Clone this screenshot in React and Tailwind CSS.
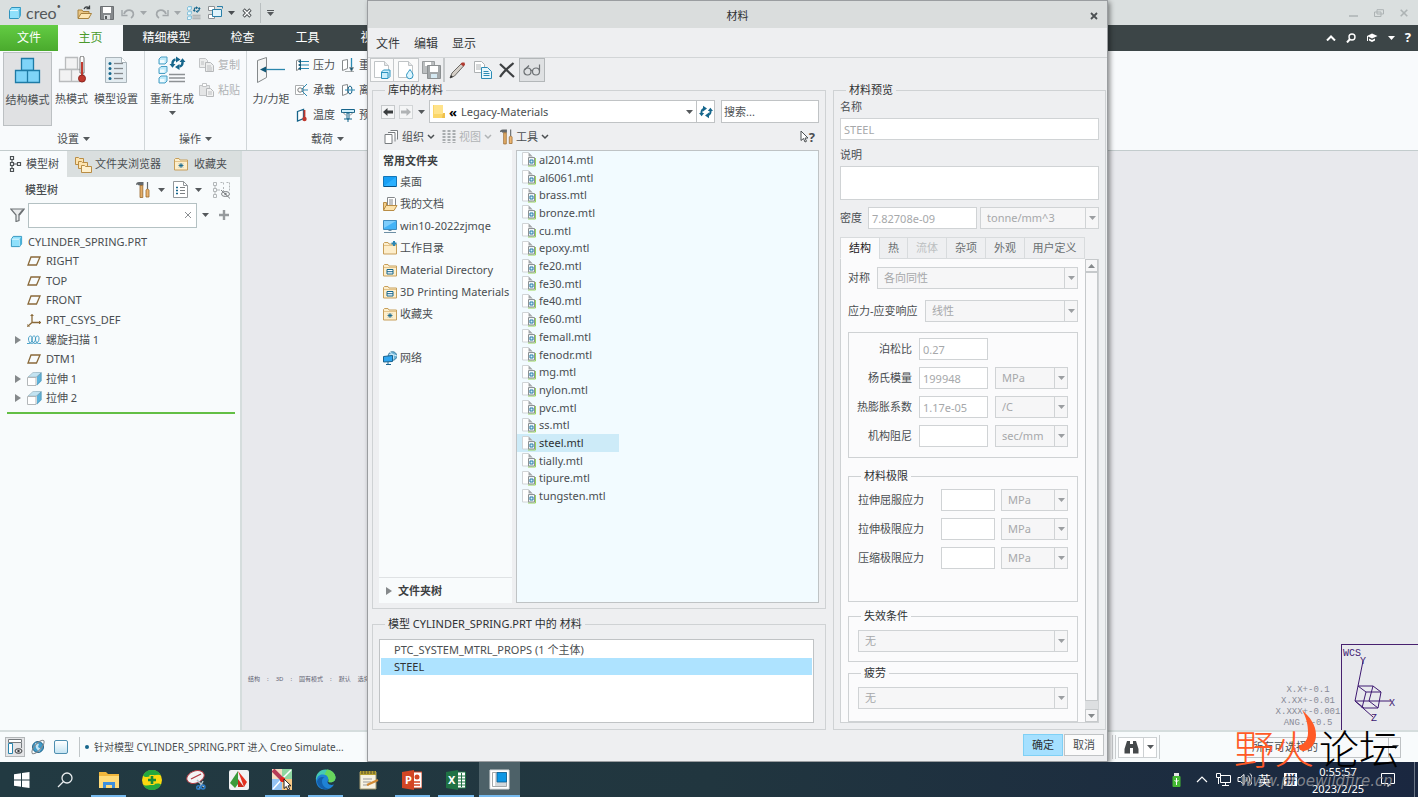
import clsx from 'clsx';

const FILES = [
  'al2014', 'al6061', 'brass', 'bronze', 'cu', 'epoxy', 'fe20', 'fe30', 'fe40', 'fe60',
  'femall', 'fenodr', 'mg', 'nylon', 'pvc', 'ss', 'steel', 'tially', 'tipure', 'tungsten',
];

/* ---------- icons ---------- */

function Svg({ w = 16, h = w, box, children, className }) {
  return (
    <svg width={w} height={h} viewBox={box || `0 0 ${w} ${h}`} fill="none" className={clsx('shrink-0', className)} aria-hidden="true">
      {children}
    </svg>
  );
}

function Caret({ className = 'text-[#55595c]' }) {
  return (
    <Svg w={7} h={4} className={className}>
      <path d="M0 0h7L3.5 4z" fill="currentColor" />
    </Svg>
  );
}

function Chevron({ className }) {
  return (
    <Svg w={8} h={6} className={className}>
      <path d="M1 1l3 3 3-3" stroke="currentColor" strokeWidth="1.5" />
    </Svg>
  );
}

function CubeIcon({ w = 14 }) {
  return (
    <Svg w={w} box="0 0 14 14">
      <path d="M1.5 4.5l2-3h9v8l-2 3h-9z" fill="#8fe0fb" stroke="#2f93bd" />
      <path d="M2 4.5h8.500v7.500" stroke="#e6f9ff" />
      <path d="M10.500 4.500l2-3v8l-2 3z" fill="#4bb3db" />
    </Svg>
  );
}

function SmallCube({ x, y }) {
  return (
    <g>
      <path d={`M${x} ${y + 2}l2-2h6v5l-2 2h-6z`} fill="#bfeafa" stroke="#4a9fc4" />
      <path d={`M${x + 1} ${y + 3}h4.500v3h-4.500z`} fill="#f0fbff" />
    </g>
  );
}

function Recycle({ w = 14 }) {
  return (
    <Svg w={w} box="0 0 14 14">
      <path d="M2.500 9V7a3.500 3.500 0 0 1 2-3.200" stroke="#16668c" strokeWidth="2" />
      <path d="M4 .8l4 2.800L4 6.400z" fill="#16668c" />
      <path d="M0 8h5.200L2.600 11.300z" fill="#16668c" />
      <path d="M11.500 5v2a3.500 3.500 0 0 1-2 3.200" stroke="#16668c" strokeWidth="2" />
      <path d="M10 7.600l-4 2.800 4 2.800z" fill="#16668c" />
      <path d="M8.800 6H14l-2.600-3.300z" fill="#16668c" />
    </Svg>
  );
}

function FolderOpen({ w = 15 }) {
  return (
    <Svg w={w} box="0 0 15 15">
      <path d="M1 13V5h4l1 1.500h6V13z" fill="#e9c583" stroke="#a8823e" />
      <path d="M1 13.500L4 8.500h10.500l-3 5z" fill="#fde6b4" stroke="#a8823e" />
      <path d="M7 4c1-2 3-2.500 5-1.500M12.500 .5v3h-3" stroke="#3d4245" strokeWidth="1.300" />
    </Svg>
  );
}

function SaveIcon() {
  return (
    <Svg w={14}>
      <path d="M.5.5h13v13h-13z" fill="#85898c" stroke="#6b6f72" />
      <path d="M3 1h8v6H3z" fill="#fff" />
      <path d="M4 9h6v4.500H4z" fill="#d8dcde" />
      <path d="M5 10h2v3H5z" fill="#55595c" />
    </Svg>
  );
}

function UndoIcon({ flip }) {
  return (
    <Svg w={14} h={12} className={flip ? '-scale-x-100' : ''}>
      <path d="M3 7C4 3.500 8 2 11 4c2.500 2 1.500 5.500-1 7" stroke="#a2a7aa" strokeWidth="1.800" />
      <path d="M1 3v5.500h5.500" fill="none" stroke="#a2a7aa" strokeWidth="1.400" />
    </Svg>
  );
}

function RegenIcon({ w = 14 }) {
  return (
    <Svg w={w} box="0 0 28 28">
      <SmallCube x={1} y={1} />
      <SmallCube x={1} y={10.5} />
      <SmallCube x={1} y={20} />
      <path d="M11 18.500h16M11 22h16M11 25.500h16" stroke="#8d9194" strokeWidth="1.400" />
      <g transform="translate(12 0)">
        <path d="M2.500 9V7a4 4 0 0 1 3-3.600M12.500 5v2a4 4 0 0 1-3 3.600" stroke="#16668c" strokeWidth="2.400" />
        <path d="M6 .5l4.500 3L6 6.500zM-.5 8h6L2.500 11.800zM9.500 8L5 11l4.500 3zM9.500 6h6l-3-3.800z" fill="#16668c" />
      </g>
    </Svg>
  );
}

function WindowsIcon() {
  return (
    <Svg w={15} h={13}>
      <path d="M.5.500h6v4h-6zM.5 8.500h6v4h-6z" fill="#fff" stroke="#8d9194" />
      <path d="M4.500 3.500h9v7h-9z" fill="#dff3fb" stroke="#2a7fa8" />
      <path d="M9 .5h5.500v2" stroke="#2a7fa8" />
    </Svg>
  );
}

function BlocksIcon({ hot }) {
  const f = hot ? '#f2f2f3' : '#7fd4f8';
  const s = hot ? '#b9bbbd' : '#1e7ba6';
  return (
    <Svg w={28} h={28}>
      <path d="M7.500 1.500h12v12h-12z" fill={f} stroke={s} strokeWidth="1.300" />
      <path d="M1.500 13.500h12v12h-12zM13.500 13.500h12v12h-12z" fill={f} stroke={s} strokeWidth="1.300" />
      {hot && (
        <g>
          <path d="M22 2a2 2 0 0 1 4 0v15h-4z" fill="#fff" stroke="#777" />
          <path d="M23 6h2v13h-2z" fill="#c23a30" />
          <circle cx="24" cy="22.500" r="3.500" fill="#c0382e" stroke="#8e2620" />
        </g>
      )}
    </Svg>
  );
}

function SettingsDoc() {
  return (
    <Svg w={24} h={28}>
      <path d="M1.500 1.500h16l5 5v20h-21z" fill="#e3ecf1" stroke="#aab4ba" />
      <path d="M17.500 1.500v5h5" fill="#fff" stroke="#aab4ba" />
      {[7.5, 12.5, 17.5, 22.5].map((y) => (
        <g key={y}>
          <circle cx="6" cy={y} r="1.500" fill="#16668c" />
          <path d={`M10 ${y}h9`} stroke="#85898c" strokeWidth="1.300" />
        </g>
      ))}
    </Svg>
  );
}

function CopyGrey() {
  return (
    <Svg w={15} h={14}>
      <path d="M.5.500h6l2 2v7h-8z" fill="#eceded" stroke="#c2c4c6" />
      <path d="M6.500 4.500h5l3 3v6h-8z" fill="#eceded" stroke="#b6b8ba" />
      <path d="M2 4h3M2 6h3M8 8h4M8 10h5M8 12h5" stroke="#bcbec0" />
    </Svg>
  );
}

function PasteGrey() {
  return (
    <Svg w={15} h={14}>
      <path d="M.5 2.500h10v10h-10z" fill="#e4e5e6" stroke="#c2c4c6" />
      <path d="M3.500.500h4v3h-4z" fill="#fff" stroke="#c2c4c6" />
      <path d="M7.500 5.500h4l3 3v5h-7z" fill="#f3f3f3" stroke="#b6b8ba" />
      <path d="M9 9h4M9 11h4" stroke="#bcbec0" />
    </Svg>
  );
}

function ForceIcon() {
  return (
    <Svg w={30} h={28}>
      <path d="M1.500 4.500l9-3v20l-9 5z" fill="#f4f5f5" stroke="#85898b" />
      <path d="M8 13.500h21" stroke="#2b87ad" strokeWidth="1.300" />
      <path d="M4 13.500l6-3v6z" fill="#125877" />
    </Svg>
  );
}

const LOAD_ICONS = {
  pressure: (
    <Svg w={14}>
      <path d="M1.500 2.500l4-1v9l-4 2z" stroke="#85898b" fill="#fff" />
      <path d="M4 3.500h10M4 7h10M4 10.500h10" stroke="#2b8ab3" />
      <path d="M3 3.500l3-2v4zM3 7l3-2v4zM3 10.500l3-2v4z" fill="#125877" />
    </Svg>
  ),
  bearing: (
    <Svg w={14}>
      <path d="M.5 2.500h8v9h-8z" stroke="#aaadaf" fill="#fff" />
      <circle cx="5" cy="7" r="2.200" stroke="#777" />
      <path d="M7 7h6M7 6l5-5M7 8l5 5" stroke="#2b8ab3" />
    </Svg>
  ),
  temperature: (
    <Svg w={14}>
      <path d="M2.500 3.500l6-2v9l-6 2.500z" stroke="#17648a" fill="#fff" strokeWidth="1.300" />
      <path d="M9.500 2v8" stroke="#c0382e" strokeWidth="1.800" />
      <circle cx="9.500" cy="11" r="2.200" fill="#c0382e" />
    </Svg>
  ),
  gravity: (
    <Svg w={14}>
      <path d="M1.500 2.500l5-1v9l-5 2z" stroke="#85898b" fill="#fff" />
      <path d="M10.500 0v12" stroke="#2b8ab3" strokeWidth="1.300" />
      <path d="M10.500 13.500l-2-4h4zM4 13.500h9" fill="#125877" stroke="#85898b" strokeWidth=".7" />
    </Svg>
  ),
  centrifugal: (
    <Svg w={14}>
      <path d="M1.500 2.500l5-1v9l-5 2z" stroke="#85898b" fill="#fff" />
      <ellipse cx="9" cy="7" rx="2" ry="4" stroke="#17648a" />
      <path d="M4 7h10" stroke="#2b8ab3" />
    </Svg>
  ),
  preload: (
    <Svg w={14}>
      <path d="M.5 1.500h13v3H.5z" fill="#cfeefa" stroke="#17648a" />
      <path d="M6 5h2v6H6zM3 11h8M7 14v-3" stroke="#17648a" />
      <path d="M2 4.500l3 3M12 4.500l-3 3" stroke="#85898b" />
    </Svg>
  ),
};

function TreeTabIcon() {
  return (
    <Svg w={14} h={18}>
      <path d="M2.500 1.500h3v3h-3zM2.500 7.500h3v3h-3zM2.500 13.500h3v3h-3zM9.500 7.500h3v3h-3zM4 4.500v3M4 10.500v3M5.500 9h4" stroke="#4c5154" strokeWidth="1.200" />
    </Svg>
  );
}

function FoldersIcon() {
  return (
    <Svg w={17} h={17}>
      <path d="M.5 8.500v-7h3l1 1h4v6z" fill="#fde3ae" stroke="#b98d45" />
      <path d="M3.500 12.500v-7h3l1 1h5v6z" fill="#fde3ae" stroke="#b98d45" />
      <path d="M6.500 16.500v-7h3l1 1h6v6z" fill="#fff0cd" stroke="#b98d45" />
    </Svg>
  );
}

function FolderMark({ kind }) {
  return (
    <Svg w={14} h={14}>
      <path d="M.5 13V2.500l1-1h3.500l1 1.500h7.500v10z" fill="#fdeecb" stroke="#c79f5a" />
      <path d="M1 4.500h12" stroke="#e3c48b" />
      {kind === 'star' && (
        <path d="M7 6v5M4.500 8.500h5M5.200 6.700l3.600 3.600M8.800 6.700l-3.600 3.600" stroke="#16668c" strokeWidth=".9" />
      )}
      {kind === 'book' && <path d="M4 6.500h6v4.500H4zM4 8.700h6" fill="#fff" stroke="#16668c" />}
      {kind === 'new' && <path d="M11 0v5M8.500 2.500h5" stroke="#2b86b3" strokeWidth="2" />}
    </Svg>
  );
}

function ToolsIcon({ w = 15 }) {
  return (
    <Svg w={w} h={17} box="0 0 15 17">
      <path d="M1 4c0-2 1-3 3-3h4.500v3.500H4L2.500 3.500z" fill="#63686b" />
      <path d="M5 4.500h2.800v12H5z" fill="#e3ad68" stroke="#97672c" strokeWidth=".8" />
      <path d="M12.500 1v7" stroke="#63686b" strokeWidth="1.200" />
      <path d="M11 9c0-1 3-1 3 0v7h-3z" fill="#edb671" stroke="#97672c" strokeWidth=".8" />
    </Svg>
  );
}

function ListDoc() {
  return (
    <Svg w={15} h={17}>
      <path d="M.5.500h10l4 4v12h-14z" fill="#fff" stroke="#92979a" />
      <path d="M10.500.500v4h4" stroke="#92979a" />
      <path d="M3 6.500h2M3 9.500h2M3 12.500h2" stroke="#16668c" strokeWidth="1.500" />
      <path d="M7 6.500h5M7 9.500h5M7 12.500h5" stroke="#7c8184" />
    </Svg>
  );
}

function HiddenTree() {
  return (
    <Svg w={19} h={18}>
      <path d="M1.500 1.500h3v3h-3zM1.500 7.500h3v3h-3zM1.500 13.500h3v3h-3zM3 4.500v3M3 10.500v3M5 9h3" stroke="#b3b7b9" />
      <path d="M8.500 1.500h3v3M11.500 6v4M14.500 1.500h3v8" stroke="#b3b7b9" strokeDasharray="2 1" />
      <ellipse cx="13.500" cy="13" rx="4" ry="2.500" stroke="#7c8083" />
      <circle cx="13.500" cy="13" r="1.200" fill="#7c8083" />
      <path d="M9 9l9 8.500" stroke="#7c8083" />
    </Svg>
  );
}

function FilterIcon() {
  return (
    <Svg w={15} h={14}>
      <path d="M.8 1h13.400L9 7v5.500l-3 1V7z" fill="#e9ebec" stroke="#6d7275" strokeWidth="1.200" />
      <path d="M9 7l4-5" stroke="#6d7275" strokeWidth="2" />
    </Svg>
  );
}

const TREE_ICONS = {
  part: <CubeIcon w={13} />,
  plane: (
    <Svg w={14} h={10}>
      <path d="M4 1h9l-3.500 8H1z" stroke="#8a6a3a" strokeWidth="1.300" />
    </Svg>
  ),
  csys: (
    <Svg w={15} h={14}>
      <path d="M5 1v8.500h9M5 9.500l-4 3.500" stroke="#8a6a3a" strokeWidth="1.300" />
      <path d="M3.500 2.500h3M12.500 8v3M0 11v3h3" stroke="#8a6a3a" />
    </Svg>
  ),
  helix: (
    <Svg w={14} h={10}>
      <path d="M0 8.500h2c2 0 3-2 3-4.500S4.500 1 3.500 1 1.500 2 1.500 4s1 4.500 3 4.500 4-2 4-4.500-.5-3-1.500-3-2 1-2 3 1 4.500 3 4.500 4-2 4-4.500-.5-3-1.500-3-2 1-2 3 1 4.500 3 4.500H14" stroke="#3a97c2" strokeWidth=".9" />
    </Svg>
  ),
  extrude: (
    <Svg w={15} h={14}>
      <path d="M5 4l4-3.500h5.500V9L10 13.500V5z" fill="#5db4dc" />
      <path d="M1 5l5-4.500h8.500L10 5z" fill="#c3e3f1" stroke="#9db8c3" strokeWidth=".7" />
      <path d="M.5 5.500h8.500v8H.5z" fill="#fff" stroke="#b3b7b9" />
      <path d="M9.500 5L14 1v7.500L9.500 13" stroke="#5f97b0" strokeWidth=".7" />
    </Svg>
  ),
};

function FileIcon() {
  return (
    <Svg w={14} h={15}>
      <path d="M.5.500h6l3.500 3.500v9H.5z" fill="#fff" stroke="#d0d4d6" />
      <path d="M6.500.500v4h4z" fill="#a5a9ac" />
      <path d="M6 14h7.500V6" stroke="#9ad65b" />
      <path d="M6.500 5.500h6v7.500h-6z" fill="#eef4f7" stroke="#8c9295" />
      <path d="M8 8h3v3H8z" fill="#d8f1fc" stroke="#277da6" />
    </Svg>
  );
}

const PLACE_ICONS = {
  desktop: (
    <Svg w={14} h={12}>
      <path d="M.5.500h13v10H.5z" fill="#18a0f5" stroke="#1376b8" />
      <path d="M1 10L13 1v9z" fill="#2bb0ff" />
      <path d="M1 10.500h12" stroke="#0b4f80" />
    </Svg>
  ),
  docs: (
    <Svg w={15} h={14}>
      <path d="M4.500.500h7l1 1v8h-8z" fill="#fff" stroke="#84888b" />
      <path d="M6 3h4M6 5h4M6 7h4" stroke="#84888b" />
      <path d="M.5 13V5.500h3v4z" fill="#f2cf8c" stroke="#b98d45" />
      <path d="M.5 13.500l2.500-5h11l-3 5z" fill="#fce2ab" stroke="#b98d45" />
    </Svg>
  ),
  pc: (
    <Svg w={14} h={13}>
      <path d="M.5.500h13v9H.5z" fill="#43b3f7" stroke="#3f8bbd" />
      <path d="M1 1h12L1 8z" fill="#7dcdfc" />
      <path d="M5.500 10.500h3M1 12.500h12" stroke="#6d8fa5" />
    </Svg>
  ),
  work: <FolderMark kind="new" />,
  book: <FolderMark kind="book" />,
  fav: <FolderMark kind="star" />,
  net: (
    <Svg w={14} h={14}>
      <circle cx="9.500" cy="5" r="4.300" fill="#6fb5d8" stroke="#3f7ea0" />
      <path d="M7 1.500c3 1 4 3 3 7M6 4c3-1 5 0 8 1" stroke="#d7eefa" />
      <path d="M.5 5.500l9-1v6l-9 .500z" fill="#2fa5ef" stroke="#19638f" />
      <path d="M3 13.500h5M5 11v2" stroke="#19638f" />
    </Svg>
  ),
};

/* ---------- form bits ---------- */

function Select({ label, value, className, id }) {
  return (
    <div className={clsx('relative h-[22px]', className)}>
      <select id={id} aria-label={label} disabled className="block h-full w-full appearance-none border border-[#d0d3d5] bg-[#f6f6f7] pl-1.5 text-[11px] leading-4 text-[#a6a8aa] opacity-100">
        <option>{value}</option>
      </select>
      <span className="pointer-events-none absolute inset-y-px right-px flex w-[13px] items-center justify-center border-l border-[#d0d3d5]">
        <Caret className="text-[#9b9ea1]" />
      </span>
    </div>
  );
}

function Field({ label, value, className, id }) {
  return (
    <input
      id={id}
      aria-label={label}
      disabled
      defaultValue={value}
      className={clsx('h-[22px] min-w-0 border border-[#d0d3d5] bg-white px-[3px] text-[11px] text-[#a6a8aa]', className)}
    />
  );
}

function Group({ title, className, body, children }) {
  return (
    <fieldset className={clsx('flex min-w-0 flex-col border border-[#cfd2d4]', className)}>
      <legend className="ml-3 h-4 px-[3px] leading-4 text-[#2e3133]">{title}</legend>
      <div className={clsx('flex flex-1 flex-col', body)}>{children}</div>
    </fieldset>
  );
}

/* ---------- Creo main window ---------- */

function TitleBar() {
  return (
    <header className="flex h-[25px] items-center bg-[#dadfdf] pl-2">
      <CubeIcon />
      <span className="ml-1 w-[49px] font-['Lato','Open_Sans',sans-serif] text-[16px] leading-5 text-[#54585a]">
        creo<span className="align-top text-[7px] leading-none">•</span>
      </span>
      <div className="flex items-center">
        <button aria-label="打开" className="flex w-[22px] justify-center pr-1"><FolderOpen /></button>
        <button aria-label="保存" className="flex w-[20px] justify-center"><SaveIcon /></button>
        <button aria-label="撤消" className="flex w-[22px] justify-center"><UndoIcon /></button>
        <Caret className="mr-[3px] ml-px text-[#a2a7aa]" />
        <button aria-label="重做" className="flex w-[24px] justify-center"><UndoIcon flip /></button>
        <Caret className="mr-[3px] text-[#a2a7aa]" />
        <button aria-label="重新生成" className="flex w-[20px] justify-center"><RegenIcon /></button>
        <button aria-label="窗口" className="flex w-[22px] justify-center"><WindowsIcon /></button>
        <Caret className="ml-0.5" />
        <button aria-label="关闭窗口" className="flex w-[24px] justify-center">
          <Svg w={10}><path d="M1.500 1.500l7 7M8.500 1.500l-7 7" stroke="#4c5154" strokeWidth="3.200" /><path d="M2 2l6 6M8 2l-6 6" stroke="#fff" strokeWidth="1.400" /></Svg>
        </button>
        <span className="ml-px h-5 w-px bg-[#b9bfc0]" />
        <span className="ml-1.5 flex flex-col gap-px"><span className="h-px w-[7px] bg-[#55595c]" /><Caret /></span>
      </div>
      <div className="ml-auto flex items-center gap-4 pr-[10px] text-[#adb3b4]">
        <Svg w={9} h={8}><path d="M0 7h9" stroke="currentColor" strokeWidth="1.500" /></Svg>
        <Svg w={10} h={8}><path d="M3 .7h6.500V5H3zM.5 3H7v4.500H.5z" stroke="currentColor" /></Svg>
        <Svg w={8}><path d="M.7.700l6.600 6.600M7.300.700L.7 7.300" stroke="currentColor" strokeWidth="1.600" /></Svg>
      </div>
    </header>
  );
}

function RibbonTabs() {
  return (
    <nav className="flex h-[26px] items-stretch bg-[#3c4547] text-xs text-white">
      <button className="w-[58px] bg-linear-to-b from-[#63cc43] to-[#4aaa2d]">文件</button>
      <button className="w-[65px] bg-[#f8fafc] text-[#4b9a2c]">主页</button>
      <button className="w-[87px]">精细模型</button>
      <button className="w-[65px]">检查</button>
      <button className="w-[65px]">工具</button>
      <button className="w-[65px]">视图</button>
      <div className="ml-auto flex items-center gap-[10px] pr-[7px]">
        <Svg w={10} h={6}><path d="M1 5.500L5 1.500l4 4" stroke="#fff" strokeWidth="2" /></Svg>
        <Svg w={10}><circle cx="6" cy="4" r="3" stroke="#fff" strokeWidth="1.400" /><path d="M4 6L1 9.500" stroke="#fff" strokeWidth="2" /></Svg>
        <Svg w={12} h={10}><path d="M1 3l5-2.500L11.500 3 6 5.500zM3 5.500v2L6 9l3-1.500v-2L6 7z" fill="#fff" /><path d="M1.500 3v5" stroke="#fff" /></Svg>
        <Caret className="text-white" />
        <b className="text-[13px]">?</b>
      </div>
    </nav>
  );
}

function RibbonGroup({ name, className, children }) {
  return (
    <section className={clsx('flex flex-col border-r border-[#d0d5d8]', className)}>
      <div className="flex flex-1 pt-px">{children}</div>
      <div className="flex h-[22px] items-center justify-center gap-1">
        {name} <Caret />
      </div>
    </section>
  );
}

function BigButton({ icon, label, className, drop }) {
  return (
    <button className={clsx('flex h-[74px] flex-col items-center pt-1 whitespace-nowrap', className)}>
      <span className="flex h-[28px] items-center">{icon}</span>
      <span className="mt-[7px] leading-4">{label}</span>
      {drop && <Caret className="mt-1 text-[#55595c]" />}
    </button>
  );
}

function SmallButtons({ items, className }) {
  return (
    <div className={clsx('flex shrink-0 flex-col', className)}>
      {items.map(([icon, label]) => (
        <button key={label} className="flex h-[25px] items-center gap-1 whitespace-nowrap">
          {icon}
          {label}
        </button>
      ))}
    </div>
  );
}

function Ribbon() {
  return (
    <div className="flex h-[100px] overflow-hidden border-b border-[#c3cccd] bg-[#f8fafc]">
      <RibbonGroup name="设置" className="w-[145px] pl-[3px]">
        <BigButton label="结构模式" icon={<BlocksIcon />} className="w-[49px] border border-[#bcc0c3] bg-[#e0e1e3]" />
        <BigButton label="热模式" icon={<BlocksIcon hot />} className="w-[39px]" />
        <BigButton label="模型设置" icon={<SettingsDoc />} className="w-[50px]" />
      </RibbonGroup>
      <RibbonGroup name="操作" className="w-[102px]">
        <BigButton label="重新生成" icon={<RegenIcon w={28} />} className="w-[54px]" drop />
        <SmallButtons className="text-[#b0b3b5]" items={[[<CopyGrey />, '复制'], [<PasteGrey />, '粘贴']]} />
      </RibbonGroup>
      <RibbonGroup name="载荷" className="w-[162px]">
        <BigButton label="力/力矩" icon={<ForceIcon />} className="w-[48px]" />
        <SmallButtons
          className="w-[46px]"
          items={[[LOAD_ICONS.pressure, '压力'], [LOAD_ICONS.bearing, '承载'], [LOAD_ICONS.temperature, '温度']]}
        />
        <SmallButtons
          items={[[LOAD_ICONS.gravity, '重力'], [LOAD_ICONS.centrifugal, '离心'], [LOAD_ICONS.preload, '预紧力']]}
        />
      </RibbonGroup>
    </div>
  );
}

const TREE = [
  { icon: 'plane', label: 'RIGHT' },
  { icon: 'plane', label: 'TOP' },
  { icon: 'plane', label: 'FRONT' },
  { icon: 'csys', label: 'PRT_CSYS_DEF' },
  { icon: 'helix', label: '螺旋扫描 1', open: true },
  { icon: 'plane', label: 'DTM1' },
  { icon: 'extrude', label: '拉伸 1', open: true },
  { icon: 'extrude', label: '拉伸 2', open: true },
];

function ModelTree() {
  return (
    <aside className="flex w-[242px] shrink-0 flex-col border-r-2 border-[#d5dddd] bg-[#f8fbfc]">
      <div className="flex h-[26px] bg-[#dadfdf]">
        <button className="flex w-[67px] items-center gap-1 bg-[#f8fbfc] pl-2"><TreeTabIcon />模型树</button>
        <button className="flex w-[100px] items-center gap-[3px] pl-2"><FoldersIcon />文件夹浏览器</button>
        <button className="flex items-center gap-1.5 pl-[7px]"><FolderMark kind="star" />收藏夹</button>
      </div>
      <div className="flex h-[25px] items-center pr-[9px] pl-[25px]">
        <b className="mr-auto font-medium">模型树</b>
        <ToolsIcon />
        <Caret className="mx-2 text-[#55595c]" />
        <ListDoc />
        <Caret className="mr-[10px] ml-[7px] text-[#55595c]" />
        <HiddenTree />
      </div>
      <div className="flex h-[26px] items-center pl-[10px]">
        <FilterIcon />
        <label className="ml-[3px] flex h-[25px] w-[169px] items-center border border-[#b4c1c3] bg-white pr-1">
          <input aria-label="过滤" className="min-w-0 flex-1 px-1 outline-none" />
          <Svg w={8}><path d="M1 1l6 6M7 1L1 7" stroke="#8b8f92" /></Svg>
        </label>
        <Caret className="mx-[5px] text-[#55595c]" />
        <button aria-label="添加" className="ml-[5px]">
          <Svg w={10}><path d="M5 0v10M0 5h10" stroke="#969a9d" strokeWidth="2.400" /></Svg>
        </button>
      </div>
      <ul className="mt-1 grid h-[176px] grid-rows-9">
        <li className="flex items-center gap-[5px] pl-[10px]">{TREE_ICONS.part}CYLINDER_SPRING.PRT</li>
        {TREE.map(({ icon, label, open }) => (
          <li key={label} className="flex items-center pl-[15px]">
            <span className="w-3">
              {open && <Svg w={6} h={8}><path d="M0 0l6 4-6 4z" fill="#85898b" /></Svg>}
            </span>
            <span className="w-[19px]">{TREE_ICONS[icon]}</span>
            {label}
          </li>
        ))}
      </ul>
      <div className="mt-1 mr-[5px] ml-[7px] h-[2px] bg-[#63bf45]" />
    </aside>
  );
}

function Canvas() {
  return (
    <main className="relative flex-1 bg-[#e8e9ed]">
      <p className="absolute bottom-[45px] left-1.5 flex gap-[7px] text-[6px] leading-3 whitespace-nowrap text-[#5f6272]">
        <span>结构</span><span>:</span><span>3D</span><span>:</span><span>固有模式</span><span>:</span><span>默认</span><span>选择</span>
      </p>
      <div className="absolute right-[77px] bottom-px w-[66px] text-center font-['Liberation_Mono',monospace] text-[9px] leading-[11px] text-[#888b97]">
        X.X+-0.1<br />X.XX+-0.01<br />X.XXX+-0.001<br />ANG.+-0.5
      </div>
      <div className="absolute right-0 bottom-0 h-[86px] w-[77px] border-t border-l border-[#47216f]">
        <Svg w={76} h={86}>
          <g stroke="#3f1a72">
            <path d="M21 16L13 56h36M13 56l18 16M16 41h15l8 6-3 16H22l-9-7M16 41l8 6h15M24 47l-4 16M31 41l-4 15 9 7" />
          </g>
          <g fill="#3f1a72" fontFamily="Liberation Mono, monospace" fontSize="10">
            <text x="1" y="11">WCS</text>
            <text x="18" y="19">Y</text>
            <text x="47" y="61">X</text>
            <text x="29" y="76">Z</text>
          </g>
        </Svg>
      </div>
    </main>
  );
}

function StatusBar() {
  return (
    <footer className="flex h-8 items-center border-t-2 border-[#d5dddd] bg-[#f8fbfc] pl-[5px]">
      <button aria-label="导航器" className="flex h-5 w-5 items-center justify-center border border-[#b3b7b9] bg-[#e4e5e7]">
        <Svg w={15} h={16}>
          <path d="M.5.500h13v3H.5z" fill="#fff" stroke="#777c7f" />
          <path d="M.5 4.500h4v10h-4z" fill="#fff" stroke="#2a85ad" /><path d="M13.500 4v5" stroke="#777c7f" />
          <ellipse cx="10.500" cy="12" rx="3.500" ry="2.300" stroke="#3a3d3f" /><circle cx="10.500" cy="12" r="1.200" fill="#3a3d3f" />
        </Svg>
      </button>
      <button aria-label="浏览器" className="ml-[5px]">
        <Svg w={16}>
          <circle cx="8" cy="8" r="5.500" fill="#3f9ccb" stroke="#23678c" />
          <path d="M5 4l4 1-1 3 3 2-2 3-3-4z" fill="#bfe4f5" />
          <ellipse cx="8" cy="8" rx="8.500" ry="3.200" transform="rotate(-48 8 8)" stroke="#85898c" />
        </Svg>
      </button>
      <button aria-label="全屏" className="ml-2 h-[14px] w-[14px] rounded-xs border border-[#4f8fb0] bg-linear-to-b from-white to-[#c5e4f2]" />
      <span className="mx-[11px] h-5 w-px bg-[#c0c6c8]" />
      <span className="mr-[5px] -ml-1.5 h-1 w-1 rounded-full bg-[#16668c]" />
      <span className="text-[10px]">针对模型 CYLINDER_SPRING.PRT 进入 Creo Simulate...</span>
      <div className="ml-auto flex items-center pr-[17px]">
        <span className="h-6 w-[4px] border-x border-[#c9cdcf]" />
        <button aria-label="查找" className="ml-0.5 flex h-[21px] w-[26px] items-center justify-center border border-[#cdd1d3] bg-white">
          <Svg w={15} h={14}>
            <path d="M3 1h3v3h3V1h3l2.500 8v4.500H9V8H6v5.500H.5V9z" fill="#45494b" />
          </Svg>
        </button>
        <span className="flex h-[21px] w-[13px] items-center justify-center border border-l-0 border-[#cdd1d3] bg-white"><Caret /></span>
        <span className="ml-0.5 h-6 w-px bg-[#c9cdcf]" />
        <div className="relative ml-[85px] h-[21px] w-[156px]">
          <select aria-label="选择过滤器" className="block h-full w-full appearance-none border border-[#bfc3c5] bg-[#f8fafb] pl-1.5">
            <option>所有可选择的</option>
          </select>
          <span className="pointer-events-none absolute inset-y-0 right-0 flex w-[13px] items-center justify-center border-l border-[#bfc3c5]"><Caret /></span>
        </div>
      </div>
    </footer>
  );
}

/* ---------- material dialog ---------- */

function DialogToolbar() {
  return (
    <div className="flex h-[25px] items-stretch border-t border-[#d2d5d7] pl-0.5">
      <button aria-label="新建实体材料" className="flex w-[24px] items-center justify-center border border-[#c6c9cb] bg-[#fafafa]">
        <Svg w={18} h={20}>
          <path d="M1.500 1.500h10l4 4v12h-14z" fill="#fff" stroke="#c0c4c6" /><path d="M11.500 1.500v4h4" fill="#e6e8e9" stroke="#c0c4c6" />
          <path d="M8.500 12l2-2h6.500v6.500l-2 2H8.500z" fill="#c9eefc" stroke="#2c93bf" /><path d="M9 12.500h6v5.500" stroke="#2c93bf" />
        </Svg>
      </button>
      <button aria-label="新建流体材料" className="flex w-[25px] items-center justify-center border border-l-0 border-[#c6c9cb] bg-[#fafafa]">
        <Svg w={18} h={20}>
          <path d="M1.500 1.500h10l4 4v12h-14z" fill="#fff" stroke="#c0c4c6" /><path d="M11.500 1.500v4h4" fill="#e6e8e9" stroke="#c0c4c6" />
          <path d="M13 9.500c2 3 3 4 3 6a3 3 0 0 1-6.500 0c0-2 2-3.500 3.500-6z" fill="#dcf5fe" stroke="#2c93bf" />
        </Svg>
      </button>
      <button aria-label="全部保存" className="flex w-[26px] items-center justify-center border-r-2 border-[#c6c9cb]">
        <Svg w={19} h={18}>
          <path d="M.5.500h12v12H.5z" fill="#bbbec0" stroke="#989c9e" /><path d="M3 1h6v4H3z" fill="#fff" />
          <path d="M5.500 4.500h13v13h-13z" fill="#a3a7a9" stroke="#8b8f91" /><path d="M8 5h8v6H8z" fill="#fff" /><path d="M9 13h6v4H9z" fill="#d5e9f2" />
        </Svg>
      </button>
      <button aria-label="编辑" className="flex w-[25px] items-center justify-center">
        <Svg w={17} h={17}>
          <path d="M1 16l2-5L12.500 1.500l2.500 2L5.500 14z" fill="#d5cfc8" stroke="#5e5b58" strokeWidth=".9" /><path d="M11.500 2L13 .5h2.500l.5 2-1.500 2z" fill="#b03a30" /><path d="M1 16l1-3 2 2z" fill="#2e2e2e" />
        </Svg>
      </button>
      <button aria-label="复制" className="flex w-[25px] items-center justify-center">
        <Svg w={18} h={18}>
          <path d="M.5.500h7l3 3v8H.5z" fill="#fff" stroke="#adb1b3" /><path d="M2 4h5M2 6h5M2 8h5" stroke="#adb1b3" />
          <path d="M7.500 6.500h6l4 4v7h-10z" fill="#e7f7fd" stroke="#2c8bb5" /><path d="M9.500 10.500h5M9.500 12.500h6M9.500 14.500h6" stroke="#2c8bb5" />
        </Svg>
      </button>
      <button aria-label="删除" className="flex w-[24px] items-center justify-center">
        <Svg w={16} h={16}><path d="M1 2l14 13M14.500 1C10 5 5 9 1 15" stroke="#3e4143" strokeWidth="2.200" /></Svg>
      </button>
      <button aria-label="预览" className="flex w-[26px] items-center justify-center border border-[#b3b7b9] bg-[#dfe1e3]">
        <Svg w={18} h={12}>
          <circle cx="4.500" cy="7.500" r="3.500" stroke="#6c7073" strokeWidth="1.200" /><circle cx="13" cy="7.500" r="3.500" stroke="#6c7073" strokeWidth="1.200" />
          <path d="M8 7c0-1 1.500-1 1.500 0M1.500 6L6 1.500M16.500 7V.5" stroke="#6c7073" strokeWidth="1.200" />
        </Svg>
      </button>
    </div>
  );
}

const PLACES = [
  ['desktop', '桌面'],
  ['docs', '我的文档'],
  ['pc', 'win10-2022zjmqe'],
  ['work', '工作目录'],
  ['book', 'Material Directory'],
  ['book', '3D Printing Materials'],
  ['fav', '收藏夹'],
  ['net', '网络'],
];

function LibraryPanel() {
  return (
    <Group title="库中的材料" className="flex-1" body="px-1.5 pt-0.5 pb-[5px]">
      <div className="flex h-[23px] items-center pl-0.5">
        <button aria-label="后退" className="flex h-[14px] w-[14px] items-center justify-center border border-[#c6c9cb] bg-[#f4f5f6]">
          <Svg w={10} h={8}><path d="M0 4l4.500-4v2.500H10v3H4.500V8z" fill="#3a3d3f" /></Svg>
        </button>
        <button aria-label="前进" className="ml-1 flex h-[14px] w-[14px] items-center justify-center border border-[#d2d5d7] bg-[#f4f5f6]">
          <Svg w={10} h={8}><path d="M10 4L5.500 0v2.500H0v3h5.500V8z" fill="#b0b3b5" /></Svg>
        </button>
        <Caret className="mr-[4px] ml-[5px] text-[#55595c]" />
        <div className="flex h-[23px] flex-1 items-center border border-[#c0c3c5] bg-white pl-[3px]">
          <Svg w={13} h={15}>
            <path d="M0 1h10v13H0z" fill="#fbd667" /><path d="M1 1h9v9H1z" fill="#ffe38b" /><path d="M10 9h2v5h-3z" fill="#eec04c" />
          </Svg>
          <b className="mr-1 ml-[3px] text-[13px] leading-4 text-black">«</b>
          <input aria-label="路径" defaultValue="Legacy-Materials" className="min-w-0 flex-1 outline-none" />
          <Caret className="mr-[3px] text-[#55595c]" />
        </div>
        <button aria-label="刷新" className="flex h-[23px] w-[18px] items-center justify-center border border-l-0 border-[#c0c3c5] bg-white"><Recycle /></button>
        <input aria-label="搜索" placeholder="搜索..." className="ml-1.5 h-[23px] w-[98px] border border-[#c0c3c5] bg-white px-0.5 placeholder:text-[#4c5053]" />
      </div>
      <div className="flex h-[27px] items-center pl-[5px]">
        <button className="flex items-center gap-[3px]">
          <Svg w={15} h={15}><path d="M6.500 1.500h7v9M4 3.500h7v9M1 5.500h7v9H1z" fill="#fff" stroke="#797d80" /></Svg>
          组织 <Chevron />
        </button>
        <button className="ml-[7px] flex items-center gap-[3px] text-[#b0b3b5]">
          <Svg w={14} h={13}><path d="M2 0v13M7 0v13M12 0v13" stroke="#a9adaf" strokeWidth="3" strokeDasharray="2 1" /></Svg>
          视图 <Chevron />
        </button>
        <button className="ml-[7px] flex items-center gap-[3px]"><ToolsIcon w={14} />工具 <Chevron /></button>
        <button aria-label="上下文帮助" className="mr-1 ml-auto flex items-center">
          <Svg w={9} h={13}><path d="M1 1v9.500l2.500-2 1.500 3.500 1.500-.7-1.500-3.300H8z" fill="#fff" stroke="#4c5053" /></Svg>
          <b className="text-[13px] leading-4">?</b>
        </button>
      </div>
      <div className="flex flex-1 gap-1">
        <div className="flex w-[133px] flex-col bg-[#f8fbfc]">
          <b className="h-[21px] pl-1 leading-[21px] font-bold text-[#3c4042]">常用文件夹</b>
          <ul className="whitespace-nowrap">
            {PLACES.map(([icon, label]) => (
              <li key={label} className="flex h-[22px] items-center pl-1 last:mt-[22px]">
                <span className="w-[17px] shrink-0">{PLACE_ICONS[icon]}</span>
                {label}
              </li>
            ))}
          </ul>
          <button className="mt-auto flex h-[26px] items-center gap-[5px] border-t border-[#dfe2e4] pl-[7px] font-bold text-[#3c4042]">
            <Svg w={7} h={8}><path d="M0 0l6 4-6 4z" fill="#85898b" /></Svg>
            文件夹树
          </button>
        </div>
        <div className="flex-1 border border-[#bfc3c5] bg-[#f2fbff]">
          <ul className="grid h-[354px] w-[102px] grid-rows-20">
            {FILES.map((name) => (
              <li key={name} className={clsx('flex items-center gap-[3px] pl-[5px]', name === 'steel' && 'bg-[#cdebf8] text-[#2e3133]')}>
                <FileIcon />
                {name}.mtl
              </li>
            ))}
          </ul>
        </div>
      </div>
    </Group>
  );
}

const CONSTANTS = [
  ['泊松比', '0.27', null],
  ['杨氏模量', '199948', 'MPa'],
  ['热膨胀系数', '1.17e-05', '/C'],
  ['机构阻尼', '', 'sec/mm'],
];

const TABS = [
  ['结构', 'w-[39px] border-t border-b border-l border-b-[#fbfbfc] bg-[#fbfbfc] text-[#1e2022]'],
  ['热', 'w-[28px] border-t border-b border-l text-[#6b6f72]'],
  ['流体', 'w-[39px] border-t border-b border-l text-[#bcbfc1]'],
  ['杂项', 'w-[39px] border-t border-b border-l text-[#6b6f72]'],
  ['外观', 'w-[39px] border-t border-b border-l text-[#6b6f72]'],
  ['用户定义', 'w-[61px] border text-[#6b6f72]'],
];

function PreviewPanel() {
  return (
    <Group title="材料预览" className="flex-1" body="px-1.5 pb-1.5">
      <label htmlFor="name" className="mt-px leading-4">名称</label>
      <Field id="name" value="STEEL" className="mt-[3px] w-full" />
      <label htmlFor="desc" className="mt-[7px] leading-4">说明</label>
      <textarea id="desc" className="mt-[3px] h-[34px] w-full shrink-0 resize-none border border-[#d0d3d5] bg-white" />
      <div className="mt-[7px] flex items-center">
        <label htmlFor="density" className="w-[28px]">密度</label>
        <Field id="density" value="7.82708e-09" className="w-[109px]" />
        <Select label="密度单位" value="tonne/mm^3" className="ml-[3px] flex-1" />
      </div>
      <div role="tablist" className="mt-2 flex h-[22px]">
        {TABS.map(([t, cls]) => (
          <button key={t} role="tab" className={clsx('border-[#d8dbdd]', cls)}>{t}</button>
        ))}
      </div>
      <div className="flex flex-1 border border-t-0 border-[#cfd2d4] bg-[#fbfbfc]">
        <div className="flex flex-1 flex-col pt-2 pr-[7px] pl-[7px]">
          <div className="flex items-center">
            <label htmlFor="sym" className="w-[29px]">对称</label>
            <Select id="sym" value="各向同性" className="flex-1" />
          </div>
          <div className="mt-[11px] flex items-center">
            <label htmlFor="resp" className="w-[77px]">应力-应变响应</label>
            <Select id="resp" value="线性" className="flex-1" />
          </div>
          <div className="mt-[10px] flex flex-col gap-[7px] border border-[#cfd2d4] pt-[5px] pr-[9px] pb-[10px] pl-2">
            {CONSTANTS.map(([label, value, unit]) => (
              <div key={label} className="flex items-center">
                <label htmlFor={label} className="w-[55px] text-right whitespace-nowrap">{label}</label>
                <Field id={label} value={value} className="ml-[7px] w-[69px]" />
                {unit && <Select label={`${label}单位`} value={unit} className="ml-[7px] flex-1" />}
              </div>
            ))}
          </div>
          <Group title="材料极限" className="mt-[10px]" body="gap-[7px] px-[9px] pt-[5px] pb-8">
            {['拉伸屈服应力', '拉伸极限应力', '压缩极限应力'].map((label) => (
              <div key={label} className="flex items-center">
                <label htmlFor={label} className="w-[83px]">{label}</label>
                <Field id={label} value="" className="w-[54px]" />
                <Select label={`${label}单位`} value="MPa" className="ml-[6px] flex-1" />
              </div>
            ))}
          </Group>
          <Group title="失效条件" className="mt-1.5" body="px-[9px] pt-1.5 pb-[9px]">
            <Select label="失效条件" value="无" />
          </Group>
          <Group title="疲劳" className="mt-[3px] flex-1" body="px-[9px] pt-1.5">
            <Select label="疲劳" value="无" />
          </Group>
        </div>
        <div className="flex w-[13px] flex-col bg-[#dddfe1]">
          <button aria-label="向上滚动" className="flex h-[13px] items-center justify-center border border-[#c6c9cb] bg-[#f6f6f7]"><Caret className="rotate-180 text-[#85898b]" /></button>
          <span className="flex-1 border border-[#c6c9cb] bg-[#f8f8f9]" />
          <button aria-label="向下滚动" className="mt-2 flex h-[13px] items-center justify-center border border-[#c6c9cb] bg-[#f6f6f7]"><Caret className="text-[#85898b]" /></button>
        </div>
      </div>
    </Group>
  );
}

function MaterialDialog() {
  return (
    <div role="dialog" aria-label="材料" className="absolute top-0 bottom-[35px] left-[367px] flex w-[741px] flex-col border border-[#9a9da0] bg-[#eeeff1] text-[#4a4e51] shadow-[2px_2px_5px_rgba(0,0,0,0.45)]">
      <div className="relative flex h-[27px] items-center justify-center bg-[#dadddd] pt-0.5 text-[#2e3133]">
        材料
        <button aria-label="关闭" className="absolute right-[9px]">
          <Svg w={8}><path d="M1 1l6 6M7 1L1 7" stroke="#4c5053" strokeWidth="1.800" /></Svg>
        </button>
      </div>
      <div className="flex h-[29px] items-center gap-[14px] pt-0.5 pl-2 text-xs text-[#36393b]">
        <button>文件</button>
        <button>编辑</button>
        <button>显示</button>
      </div>
      <DialogToolbar />
      <div className="flex flex-1 gap-[7px] pr-px pl-1">
        <div className="flex w-[454px] flex-col">
          <LibraryPanel />
          <Group title="模型 CYLINDER_SPRING.PRT 中的 材料" className="mt-[7px]" body="pt-[7px] pr-[11px] pb-1.5 pl-1.5">
            <ul className="h-[84px] border border-[#c0c3c5] bg-white px-px pt-px leading-[17px]">
              <li className="pl-[13px]">PTC_SYSTEM_MTRL_PROPS (1 个主体)</li>
              <li className="bg-[#aee3ff] pl-[13px] text-[#2e3133]">STEEL</li>
            </ul>
          </Group>
        </div>
        <PreviewPanel />
      </div>
      <div className="flex h-[31px] justify-end gap-px pt-1 pr-[3px]">
        <button className="h-[22px] w-[40px] border border-[#7fd0f5] bg-[#a5e0ff] text-[#2e3133]">确定</button>
        <button className="h-[22px] w-[40px] border border-[#c0c3c5] bg-[#fbfbfb]">取消</button>
      </div>
    </div>
  );
}

/* ---------- Windows taskbar ---------- */

const APPS = [
  { name: '开始', icon: <Svg w={16}><path d="M0 2.300l7-1v6.300H0zM8 1.100L15.500 0v7.600H8zM0 8.500h7v6.300l-7-1zM8 8.500h7.500V16L8 14.900z" fill="#fff" /></Svg> },
  { name: '搜索', icon: <Svg w={16}><circle cx="10" cy="6" r="5" stroke="#e9edef" strokeWidth="1.300" /><path d="M6.500 9.500L1 15" stroke="#e9edef" strokeWidth="1.300" /></Svg> },
  { name: '文件资源管理器', run: true, icon: (
    <Svg w={20} h={18}><path d="M0 1h7l2 2h11v14H0z" fill="#f0b63c" /><path d="M0 5h20v12H0z" fill="#ffdb79" /><path d="M4 17v-6h12v6h-3v-3H7v3z" fill="#3d8fdd" /></Svg>
  ) },
  { name: '360', icon: (
    <Svg w={20}><circle cx="10" cy="10" r="10" fill="#fbd90f" /><path d="M1 5.500A10 10 0 0 1 19 5.500C15 2.500 5 10 1 5.500zM1 14.500A10 10 0 0 0 19 14.500C15 11 5 18 1 14.500z" fill="#25a83e" /><path d="M10 5v10M5 10h10" stroke="#fbd90f" strokeWidth="5" /><path d="M10 6v8M6 10h8" stroke="#178a37" strokeWidth="2.600" /></Svg>
  ) },
  { name: '截图工具', icon: (
    <Svg w={21} h={20}><ellipse cx="10.500" cy="7" rx="9" ry="6" fill="#f4f4f5" stroke="#b33a42" transform="rotate(-20 10.500 7)" /><path d="M6 9l10-5" stroke="#b33a42" strokeWidth="1.300" /><path d="M12 10l7 7M18 11l-4 8" stroke="#b7c3cc" strokeWidth="1.500" /><circle cx="18" cy="17" r="2" stroke="#2e7dc9" strokeWidth="1.400" /><circle cx="13.500" cy="17.500" r="1.800" stroke="#2e7dc9" strokeWidth="1.400" /></Svg>
  ) },
  { name: '钢构', icon: (
    <Svg w={20}><rect width="20" height="20" rx="2" fill="#f1f2f3" /><path d="M9 1L1 13l5 5 3-4z" fill="#3b9a3a" /><path d="M9 1l9 11-3 5z" fill="#e4311f" /><path d="M9 9l6 8H9z" fill="#c92a1a" /></Svg>
  ) },
  { name: 'Creo', run: true, icon: (
    <Svg w={23} h={21}><path d="M1 0h10v10H1z" fill="#f4dcc2" /><path d="M11 0h10v10H11z" fill="#8fd7a1" /><path d="M1 10h10v11H1z" fill="#93c2f2" /><path d="M11 10h10v11H11z" fill="#f7c987" /><path d="M2 1l9 9" stroke="#b53a57" strokeWidth="4" /><path d="M11 10L2 20M11 10l9-9" stroke="#fff" strokeWidth="1.500" /><circle cx="11.500" cy="10.500" r="2.600" fill="#e5231d" /><path d="M13 10v9.500l2.300-2 1.700 3.500 1.700-.8-1.700-3.400h3z" fill="#fff" stroke="#222" /></Svg>
  ) },
  { name: 'Edge', run: true, icon: (
    <Svg w={21} h={21}><path d="M1 12C0 5 5 .5 10.500.500 17 .5 20.500 5 20.500 8.500c0 4-3.500 5.500-7 4.500 1-4-2-6-5-5-4 1-6 4-7.500 4z" fill="#46c9b4" /><path d="M12 .6c5 .5 8.500 4.400 8.500 7.900 0 4-3.500 5.500-7 4.500 1-4-2-6-5-5z" fill="#68d65c" /><path d="M1 12C2 7 5 5 8 5.500c4 0 6 3 5 6-1.500 3 2 5.500 6 4C17 19 14 20.500 10.500 20.500 5 20.500 1.500 17 1 12z" fill="#1f82d5" /><path d="M7 12c0 5 4 8 8 7.500-6 2.500-12-1-13-7C4 7 8 8 9.500 8.500 8 9 7 10 7 12z" fill="#1360ac" /></Svg>
  ) },
  { name: '记事本', icon: (
    <Svg w={20}><path d="M1 2h16v17H1z" fill="#f6f2e2" stroke="#a69b71" /><path d="M1 1h16v4H1z" fill="#b5a030" /><path d="M3 1v3M6 1v3M9 1v3M12 1v3M15 1v3" stroke="#4e4a2f" /><path d="M4 9h9M4 12h8M4 15h6" stroke="#999" /><path d="M8 15l11-5" stroke="#d18a35" strokeWidth="2.200" /></Svg>
  ) },
  { name: 'PowerPoint', run: true, icon: (
    <Svg w={20}><path d="M11 2h9v16h-9z" fill="#fff" stroke="#d24625" /><circle cx="15" cy="7" r="2.500" fill="#d24625" /><path d="M12 12h6M12 15h6" stroke="#d24625" strokeWidth="1.300" /><path d="M0 2l12-2v20L0 18z" fill="#d24625" /><text x="3" y="14" fill="#fff" fontSize="11" fontWeight="bold">P</text></Svg>
  ) },
  { name: 'Excel', run: true, icon: (
    <Svg w={20}><path d="M11 2h8.500v16H11z" fill="#fff" stroke="#1f7244" /><path d="M12 6h7M12 9h7M12 12h7M12 15h7M15.500 3v14" stroke="#1f7244" /><path d="M0 2l12-2v20L0 18z" fill="#1f7244" /><text x="2" y="14" fill="#fff" fontSize="11" fontWeight="bold">X</text></Svg>
  ) },
  { name: 'Creo Simulate', run: true, active: true, icon: (
    <Svg w={21}><path d="M1 1h19v19H1z" fill="#fff" stroke="#d9dcdd" /><path d="M3.500 3.500h14v14h-14z" fill="#d3d8db" stroke="#85898b" strokeWidth=".7" /><path d="M8 3.500h9.500V13H8z" fill="#0d96e4" stroke="#0b5e91" strokeWidth=".8" /><path d="M4 4h2v13H4z" fill="#fff" /></Svg>
  ) },
];

function Taskbar() {
  return (
    <div className="relative z-10 flex h-[35px] bg-linear-to-r from-[#223a42] via-[#21363f] to-[#1a2740] text-white">
      <div className="grid w-[521px] grid-cols-12">
        {APPS.map((a) => (
          <button key={a.name} aria-label={a.name} className={clsx('flex items-center justify-center', a.active ? 'mx-px' : 'mx-1', a.run && 'border-b-2 border-[#76b9ed] pt-0.5', a.active && 'bg-[#4d6168]')}>
            {a.icon}
          </button>
        ))}
      </div>
      <div className="mr-[3px] ml-auto flex items-center border-r border-[#6b7686]">
        <Svg w={9} h={14}><rect x=".5" y="3" width="8" height="11" rx="1" fill="#45b933" /><path d="M2 0h5v3H2z" fill="#e6e6e6" /><path d="M4.500 5v7M2.500 7l2 2 2-2" stroke="#fff" /></Svg>
        <Svg w={12} h={7} className="ml-[15px]"><path d="M1 6l5-5 5 5" stroke="#fff" strokeWidth="1.200" /></Svg>
        <Svg w={15} h={13} className="ml-2"><path d="M4.500 2.500h10v7h-10zM9.500 9.500v3M6 12.500h7" stroke="#fff" /><path d="M.5.500h4v4h-4zM2.500 4.500V11" stroke="#fff" fill="#1b2b40" /></Svg>
        <Svg w={15} h={13} className="ml-[6px]"><path d="M1 4.500h2.500L7 1.500v10L3.500 8.500H1zM9 4.500c1 1 1 3 0 4M11 2.500c2 2 2 6 0 8M13 .5c3 3 3 9 0 12" stroke="#fff" /></Svg>
        <span className="ml-[6px] text-[13px]">英</span>
        <span className="ml-[13px] flex h-[13px] w-[13px] items-center justify-center bg-white text-[11px] font-bold text-[#1b2940]">拼</span>
        <div className="ml-[9px] w-[64px] text-center leading-[17px]">0:55:57<br />2023/2/25</div>
        <Svg w={14} h={14} className="mr-[19px] ml-[11px]"><path d="M.5.500h13v10h-4l-2.500 3v-3H.5z" stroke="#fff" /></Svg>
      </div>
    </div>
  );
}

function Watermark() {
  return (
    <div className="pointer-events-none absolute right-[19px] bottom-[7px] z-20 w-[165px] select-none">
      <div className="flex items-end justify-between text-[40px] leading-[46px] font-light">
        <span className="text-[#ff5a26]">野火</span>
        <span className="text-black">论坛</span>
      </div>
      <p className="text-center font-['DejaVu_Sans',sans-serif] text-[15px] leading-[18px] whitespace-nowrap text-[#9a9ca0]/80 italic">www.proewildfire.cn</p>
      <Svg w={18} h={42} className="absolute -top-4 left-[64px]">
        <path d="M4 0c8 7 14 15 14 25 0 8-5 15-12 16-4 0-6-3-5-6 4 1 9-5 9-12C10 14 8 7 4 0z" fill="#ff5a26" />
      </Svg>
    </div>
  );
}

export default function App() {
  return (
    <div className="relative flex min-h-screen flex-col overflow-hidden font-['Noto_Sans','Noto_Sans_CJK_SC',sans-serif] text-[11px] leading-4 text-[#4a4e51]">
      <TitleBar />
      <RibbonTabs />
      <Ribbon />
      <div className="flex flex-1">
        <ModelTree />
        <Canvas />
      </div>
      <StatusBar />
      <MaterialDialog />
      <Taskbar />
      <Watermark />
    </div>
  );
}
